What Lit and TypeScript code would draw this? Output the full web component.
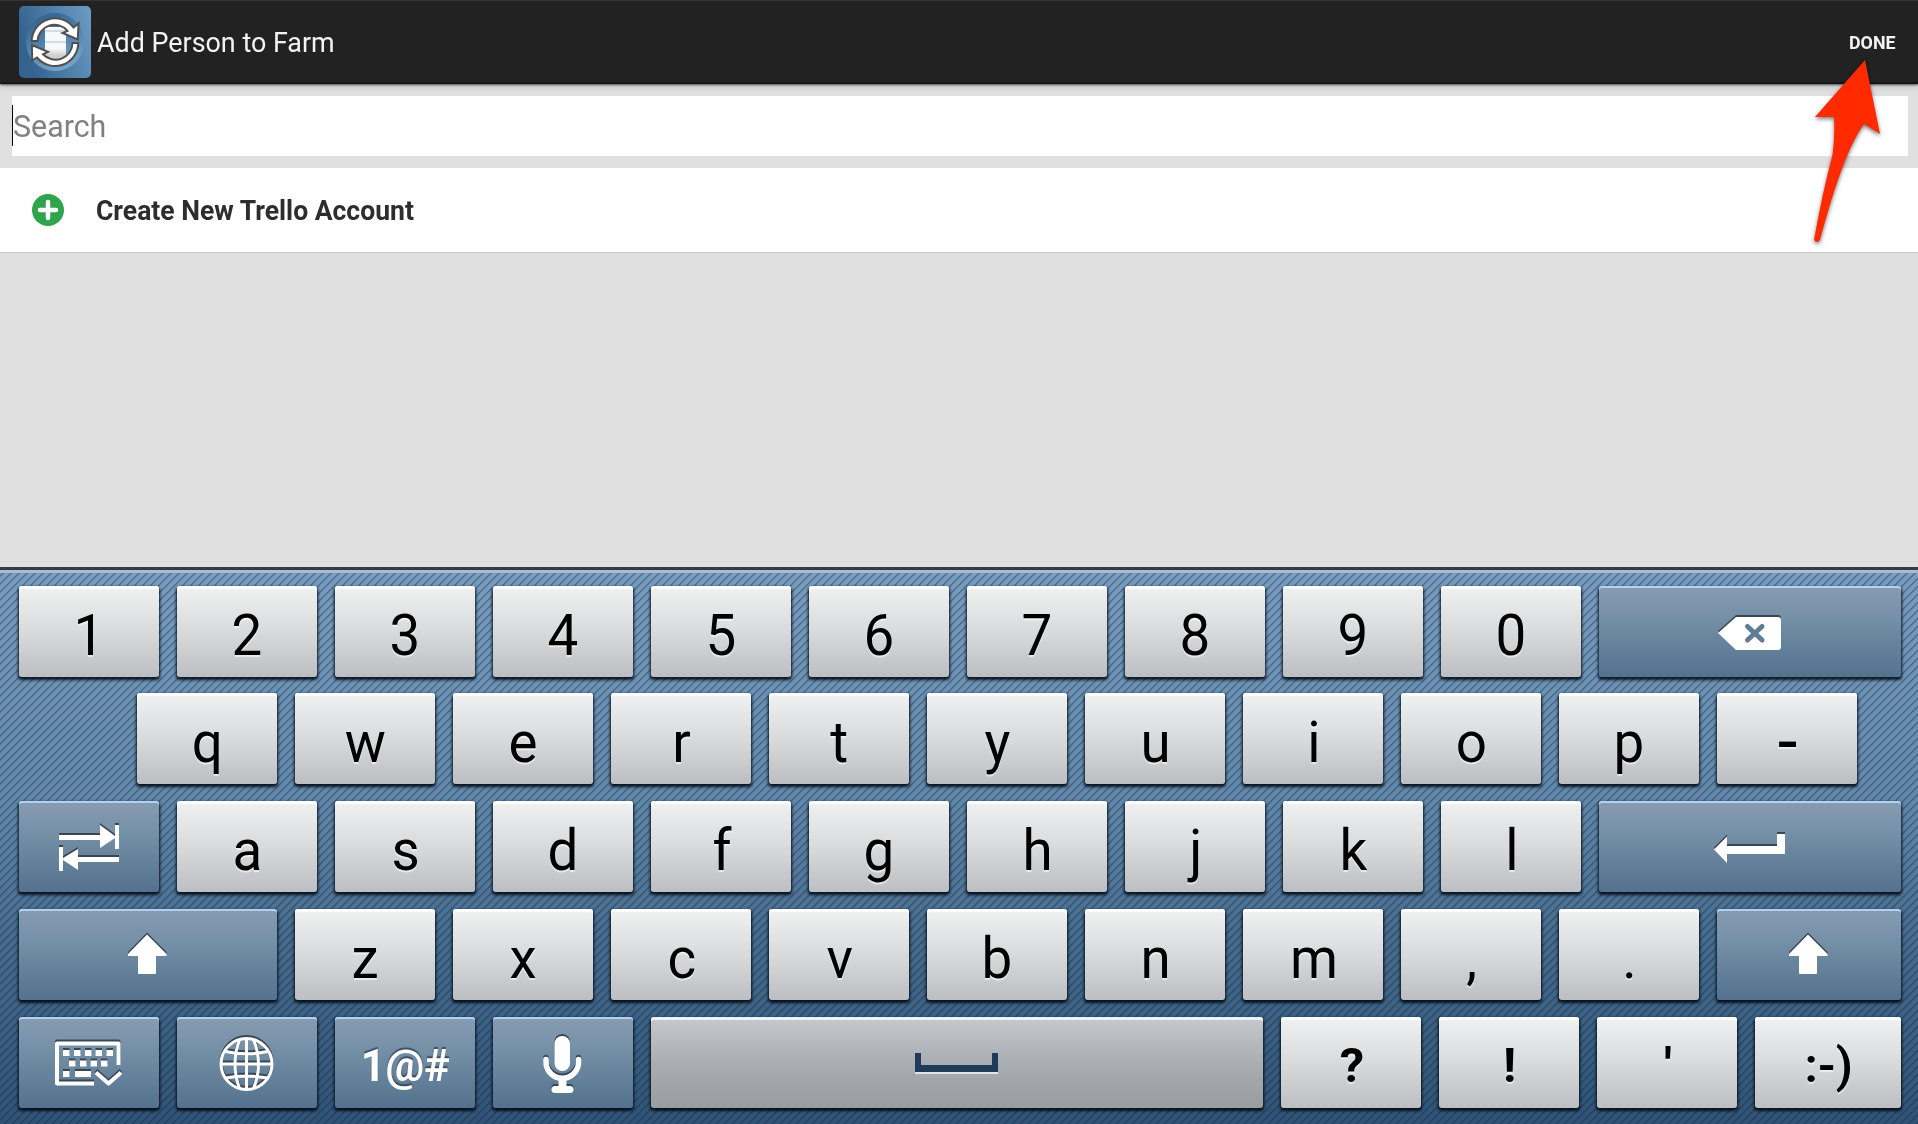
import { LitElement, html, css, svg, nothing } from "lit";
import { customElement } from "lit/decorators.js";

type Key = { t?: string; icon?: string; w?: number; kind?: string };

const chars = (s: string): Key[] => s.split("").map((t) => ({ t }));

const ROWS: Key[][] = [
  [...chars("1234567890"), { icon: "back", w: 302, kind: "fn" }],
  [...chars("qwertyuiop"), { t: "-", kind: "dash" }],
  [{ icon: "tab", kind: "fn" }, ...chars("asdfghjkl"), { icon: "enter", w: 302, kind: "fn" }],
  [{ icon: "shift", w: 258, kind: "fn" }, ...chars("zxcvbnm,."), { icon: "shift", w: 184, kind: "fn" }],
  [
    { icon: "hide", kind: "fn" },
    { icon: "globe", kind: "fn" },
    { t: "1@#", kind: "fn" },
    { icon: "mic", kind: "fn" },
    { icon: "space", w: 612, kind: "space" },
    { t: "?", kind: "sym" },
    { t: "!", kind: "sym" },
    { t: "'", kind: "sym" },
    { t: ":-)", w: 146, kind: "sym face" },
  ],
];

/* Icon shapes are drawn on the canvas of a whole key, 91px high. */
const ICONS: Record<string, { w: number; body: unknown }> = {
  back: {
    w: 302,
    body: svg`<path d="M119 47L137 31H179Q182 31 182 34V61Q182 64 179 64H137Z"/>
      <path class="cut" d="M148.500 40.500L163 54M163 40.500L148.500 54"/>`,
  },
  tab: {
    w: 140,
    body: svg`<path d="M40 34h41v-10l15 11v-11h4v24h-4v-11l-15 10v-8h-41z"/>
      <path d="M100 56H59v-8L44 57V46h-4v24h4V59l15 10v-8h41z"/>`,
  },
  enter: { w: 302, body: svg`<path d="M115 48.500L128 35.500V45H178V33H186V53H128V62Z"/>` },
  shift: {
    w: 40,
    body: svg`<path d="M19 25.500L38.500 45V47H28V64.500L27 65H11L10 64.500V47H0V45Z"/>`,
  },
  hide: {
    w: 140,
    body: svg`<path class="line" d="M99.500 48V26.500H38V66.500H75M77 55.500L89.500 66.500L102 55.500"/>
      ${[44, 55, 66, 76.5, 87.5].map((x) => svg`<rect x=${x} y="33" width="6.500" height="6"/>`)}
      ${[50, 61, 71.500, 82].map((x) => svg`<rect x=${x} y="43.500" width="6.500" height="6"/>`)}
      <rect x="44" y="54" width="6.500" height="6"/><rect x="56" y="54" width="16" height="6"/>`,
  },
  globe: {
    w: 140,
    body: svg`<g class="thin"><circle cx="69.500" cy="47" r="25.500"/><path d="M69.500 21.500V72.500M44 47H95M48.500 34.500Q69.500 39 90.500 34.500M48.500 61Q69.500 57 90.500 61M62.500 22.500Q53.500 47 62.500 71.500M76.500 22.500Q86.500 47 76.500 71.500"/></g>`,
  },
  mic: {
    w: 140,
    body: svg`<rect x="61.500" y="19" width="15.500" height="35" rx="7.700"/>
      <path class="arm" d="M53 42.500V45A16.300 16.300 0 0 0 85.600 45V42.500"/>
      <rect x="65.500" y="60" width="8" height="10"/><rect x="58.500" y="69" width="22" height="7" rx="3.500"/>`,
  },
};

@customElement("key-cap")
class KeyCap extends LitElement {
  static properties = { data: { attribute: false } };
  declare data: Key;
  static styles = css`
    :host { display: block; }
    .key {
      box-sizing: border-box;
      height: 91px;
      border-radius: 3px;
      display: flex;
      justify-content: center;
      align-items: center;
      font: 57px/91px Roboto, sans-serif;
      color: #000;
      background: linear-gradient(#f0f2f2, #d9dadb 50%, #bdbec2);
      box-shadow: inset 0 3px #fbffff, 0 2px 3px 1px rgba(0, 10, 20, 0.9);
      text-shadow: 0 2px 1px #fff9;
    }
    .label { padding: 7px 0 0 1px; transform: scaleX(0.96); }
    .fn {
      background: linear-gradient(#889cb3, #738fa6 38%, #54718e);
      box-shadow: inset 0 2px #b3d1f2, 0 2px 3px 1px rgba(0, 10, 20, 0.9);
      color: #fff;
      font-size: 45px;
      font-weight: 700;
      text-shadow: 0 -2px 1px #2c3c4ccc;
    }
    .fn .label { padding-top: 6px; }
    .space {
      background: linear-gradient(#c7cacd, #aaadb1 50%, #989da1);
      box-shadow: inset 0 3px #ecf3f6, 0 2px 3px 1px rgba(0, 10, 20, 0.9);
    }
    .dash .label { transform: scaleX(1.15); font-weight: 500; }
    .sym { font-size: 48px; font-weight: 700; }
    .sym .label { padding-top: 5px; transform: scaleX(1.02); }
    .face { font-weight: 600; }
    .bar {
      box-sizing: border-box;
      width: 83px;
      height: 19px;
      border: solid #203b57;
      border-width: 0 6px 7px;
      box-shadow: 0 2px #dde6ef;
      margin: 0 2px 0 0;
    }
    svg { display: block; height: 91px; fill: #fff; filter: drop-shadow(0 -2px 0 #3a4652); }
    .cut { fill: none; stroke: #5f7b97; stroke-width: 5; stroke-linecap: round; }
    .line { fill: none; stroke: #fff; stroke-width: 4; stroke-linejoin: round; }
    .thin { fill: none; stroke: #fff; stroke-width: 3; }
    .arm { fill: none; stroke: #fff; stroke-width: 5.500; stroke-linecap: round; }
  `;
  render() {
    const k = this.data;
    const icon = k.icon ? ICONS[k.icon] : undefined;
    return html`<div class="key ${k.kind ?? ""}" style="width:${k.w ?? 140}px">
      ${k.t ? html`<span class="label">${k.t}</span>` : nothing}
      ${icon ? html`<svg width=${icon.w} height="91" viewBox="0 0 ${icon.w} 91">${icon.body}</svg>` : nothing}
      ${k.icon === "space" ? html`<div class="bar"></div>` : nothing}
    </div>`;
  }
}

@customElement("app-root")
class AppRoot extends LitElement {
  static styles = css`
    :host {
      display: flex;
      flex-direction: column;
      position: relative;
      width: 1918px;
      height: 1124px;
      overflow: hidden;
      background: #e0e0e0;
      font-family: Roboto, sans-serif;
    }
    .bar {
      box-sizing: border-box;
      height: 84px;
      flex: none;
      display: flex;
      align-items: center;
      padding: 0 22px 0 19px;
      background: #222;
      border-top: 1px solid #333;
      border-bottom: 2px solid #161616;
      box-shadow: 0 1px 2px #0009, 0 3px 7px #0002;
      color: #f3f3f3;
    }
    .logo { width: 72px; height: 72px; flex: none; }
    .title {
      flex: 1;
      padding: 2px 0 0 6px;
      font-size: 28px;
      white-space: nowrap;
      transform: scaleX(0.96);
      transform-origin: 6px 0;
    }
    .done { padding-top: 2px; font-size: 19px; font-weight: 700; transform: scaleX(0.94); transform-origin: 100% 0; }
    .search {
      flex: none;
      display: flex;
      align-items: center;
      height: 60px;
      margin: 12px 10px 12px 12px;
      background: #fff;
      color: #808080;
      font-size: 31px;
    }
    .caret { width: 1px; height: 41px; background: #000; margin-bottom: 1px; }
    .hint { transform: scaleX(0.98); transform-origin: 0 0; }
    .row {
      box-sizing: border-box;
      flex: none;
      height: 85px;
      display: flex;
      align-items: center;
      padding-left: 32px;
      gap: 32px;
      background: #fff;
      border-bottom: 1px solid #c6c6c6;
      font-size: 27.5px;
      font-weight: 700;
      color: #2d2d2d;
    }
    .name { transform: scaleX(0.965); transform-origin: 0 0; }
    .fill { flex: 1; }
    .board {
      box-sizing: border-box;
      flex: none;
      height: 557px;
      padding: 13px 17px 0 19px;
      border-top: 3px solid #333b48;
      box-shadow: inset 0 3px #aab9ce;
      display: flex;
      flex-direction: column;
      gap: 17px;
      background: repeating-linear-gradient(135deg, transparent 0 3.200px, #0b253f60 4.200px 4.700px, transparent 5.657px),
        linear-gradient(#7a9dbf, #6287a9 42%, #496d8f 65%, #305375);
    }
    .keys { display: flex; gap: 18px; }
    .keys:nth-child(1) { margin: 3px 0 -1px; }
    .keys:nth-child(2) { margin-left: 118px; }
    .arrow { position: absolute; left: 1805px; top: 50px; filter: drop-shadow(0 2px 2px #0008); }
  `;
  render() {
    return html`
      <header class="bar">
        <svg class="logo" viewBox="0 0 72 72">
          <defs>
            <linearGradient id="bg" x1="0" y1=".3" x2="1" y2="0"><stop stop-color="#35638f" /><stop offset="1" stop-color="#6c9dc4" /></linearGradient>
            <linearGradient id="disc" x1=".2" y1="0" x2=".6" y2="1"><stop stop-color="#2f608f" /><stop offset="1" stop-color="#76a6cb" /></linearGradient>
            <linearGradient id="sheet" x1="0" y1="0" x2="0" y2="1"><stop offset=".65" stop-color="#f7f8f9" /><stop offset=".85" stop-color="#cfd0d1" /></linearGradient>
          </defs>
          <rect width="72" height="72" rx="5" fill="url(#bg)" />
          <circle cx="36" cy="36" r="29" fill="url(#disc)" />
          <path d="M26 21h21v31q-10.500 4-21 0z" fill="url(#sheet)" />
          <path d="M26 25h21M26 36h21" stroke="#c6d2dd" stroke-width="1.500" />
          <g fill="#fff" stroke="#505050" stroke-width="2" stroke-linejoin="miter">
            <path d="M12.700 35A23.300 23.300 0 0 1 54.500 21.500L59.500 17.500L58.800 33.500L43.500 27L48.500 24.800A17 17 0 0 0 18.500 35Z" />
            <path d="M59.300 37A23.300 23.300 0 0 1 18 51.500L13.200 54.500L12.900 39L29 45.800L24 48.300A17 17 0 0 0 53.500 37Z" />
          </g>
        </svg>
        <div class="title">Add Person to Farm</div>
        <div class="done">DONE</div>
      </header>
      <div class="search"><span class="caret"></span><span class="hint">Search</span></div>
      <div class="row">
        <svg width="32" height="32" viewBox="0 0 32 32">
          <circle cx="16" cy="16" r="16" fill="#2ea44c" />
          <path d="M16 8v16M8 16h16" stroke="#fff" stroke-width="4.500" stroke-linecap="round" />
        </svg>
        <span class="name">Create New Trello Account</span>
      </div>
      <div class="fill"></div>
      <section class="board">
        ${ROWS.map((r) => html`<div class="keys">${r.map((k) => html`<key-cap .data=${k}></key-cap>`)}</div>`)}
      </section>
      <svg class="arrow" width="90" height="200" viewBox="0 0 90 200">
        <path fill="#ff2a00" d="M60 10L75 84L59 74C42 98 29 139 15 190Q12 194 9 190Q18 140 27.500 105Q30 88 29 67L10 67Z" />
      </svg>
    `;
  }
}
